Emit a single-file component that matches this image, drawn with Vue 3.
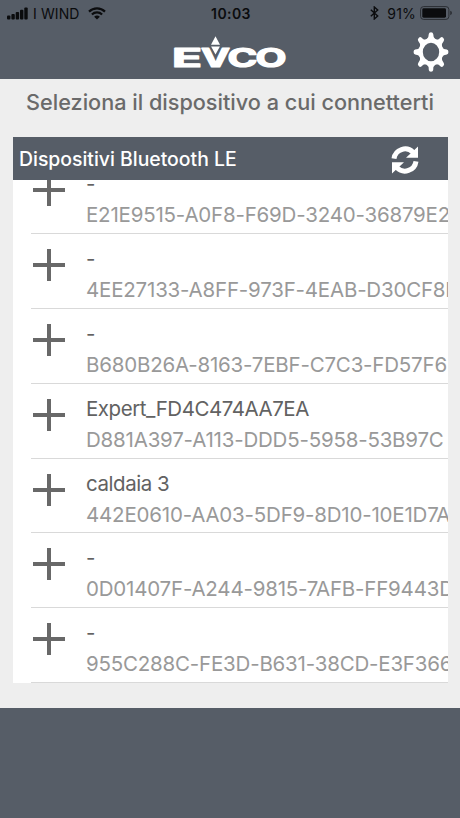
<template>
  <div class="screen">
    <header class="topbar">
      <div class="status">
        <div class="status-left">
          <svg class="signal" width="21" height="13" viewBox="0 0 21 13">
            <rect x="0" y="8.5" width="3.4" height="4" rx="1" />
            <rect x="4.4" y="7" width="3.4" height="5.5" rx="1" />
            <rect x="8.7" y="5" width="3.4" height="7.5" rx="1" />
            <rect x="13" y="2.8" width="3.4" height="9.7" rx="1" />
            <rect x="17.3" y="0.4" width="3.4" height="12.1" rx="1" />
          </svg>
          <span class="carrier">I WIND</span>
          <svg class="wifi" width="18" height="13" viewBox="0 0 18 13">
            <path d="M1 4.6a11.5 11.5 0 0 1 16 0M3.9 7.5a7.4 7.4 0 0 1 10.2 0" fill="none" stroke="#0b0c0e" stroke-width="2.2" />
            <path d="M9 12.6 6.1 9.8a4.2 4.2 0 0 1 5.8 0z" />
          </svg>
        </div>
        <span class="clock">10:03</span>
        <div class="status-right">
          <svg width="9" height="14" viewBox="0 0 9 14">
            <path d="M.8 3.8 7.7 10 4.3 13V1l3.4 3L.8 10.2" fill="none" stroke="#0b0c0e" stroke-width="1.4" />
          </svg>
          <span class="percent">91%</span>
          <svg class="battery" width="33" height="14" viewBox="0 0 33 14">
            <rect x=".6" y=".6" width="28.3" height="12.8" rx="3" fill="none" stroke="#25282d" stroke-width=".9" />
            <rect x="2.3" y="2.3" width="23.7" height="9.4" rx="1.4" />
            <path d="M30.3 4.8v4.4q1.6-.6 1.6-2.2t-1.6-2.2z" fill="#25282d" />
          </svg>
        </div>
      </div>
      <div class="brand-row">
        <svg class="logo" width="124" height="44" viewBox="-4 0 124 44">
          <g class="logo-text">
            <text x="-1" y="31.2" textLength="30" lengthAdjust="spacingAndGlyphs">E</text>
            <text x="28" y="31.2" textLength="29" lengthAdjust="spacingAndGlyphs">V</text>
            <text x="54.5" y="31.2" textLength="30" lengthAdjust="spacingAndGlyphs">C</text>
            <text x="82.5" y="31.2" textLength="31" lengthAdjust="spacingAndGlyphs">O</text>
          </g>
          <path d="M42.5 .2 47 8.8h-9zM38.1 10.4h8.8l-4.4 8z" fill="#fff" />
        </svg>
        <svg class="gear" width="36" height="40" viewBox="-18 -20 36 40">
          <g transform="scale(.88 1)">
            <circle r="11.6" fill="none" stroke="#fff" stroke-width="4.6" />
            <path
              v-for="n in 8"
              :key="n"
              :transform="`rotate(${n * 45})`"
              d="M-5-12.6Q-2.5-14-2.5-18Q-2.3-19.8 0-19.8T2.5-18Q2.5-14 5-12.6z"
              fill="#fff"
            />
          </g>
        </svg>
      </div>
    </header>

    <main class="content">
      <h1>Seleziona il dispositivo a cui connetterti</h1>
      <section class="panel">
        <div class="panel-head">
          <h2>Dispositivi Bluetooth LE</h2>
          <svg class="refresh" width="28" height="28" viewBox="0 0 28 28">
            <path d="M3 12.6A11.2 11.2 0 0 1 22 6.2M25 15.4A11.2 11.2 0 0 1 6 21.8" fill="none" stroke="#fff" stroke-width="5" />
            <path d="M27 .5v11.3H15zM1 27.5V16.2h12z" fill="#fff" />
          </svg>
        </div>
        <div class="list">
          <div v-for="device in devices" :key="device.id" class="device">
            <span class="plus"></span>
            <div class="info">
              <p class="name">{{ device.name }}</p>
              <p class="uuid">{{ device.id }}</p>
            </div>
          </div>
        </div>
      </section>
    </main>

    <footer class="bottom"></footer>
  </div>
</template>

<script setup>
const devices = [
  { name: '-', id: 'E21E9515-A0F8-F69D-3240-36879E2' },
  { name: '-', id: '4EE27133-A8FF-973F-4EAB-D30CF8D' },
  { name: '-', id: 'B680B26A-8163-7EBF-C7C3-FD57F6' },
  { name: 'Expert_FD4C474AA7EA', id: 'D881A397-A113-DDD5-5958-53B97C' },
  { name: 'caldaia 3', id: '442E0610-AA03-5DF9-8D10-10E1D7A' },
  { name: '-', id: '0D01407F-A244-9815-7AFB-FF9443D' },
  { name: '-', id: '955C288C-FE3D-B631-38CD-E3F366' },
];
</script>

<style>
body {
  margin: 0;
}
</style>

<style scoped>
.screen {
  width: 460px;
  height: 818px;
  display: flex;
  flex-direction: column;
  overflow: hidden;
  background: #eeeeee;
  font-family: Inter, "Liberation Sans", sans-serif;
}

.topbar {
  height: 79px;
  flex: none;
  background: #565d67;
}

/* Barra de estado */
.status {
  height: 26px;
  display: grid;
  grid-template-columns: 1fr auto 1fr;
  align-items: center;
  padding: 0 7px;
  color: #0b0c0e;
  fill: #0b0c0e;
  font-size: 14px;
}

.status-left,
.status-right {
  display: flex;
  align-items: center;
}

.status-right {
  justify-content: flex-end;
}

.carrier {
  margin-left: 5px;
  font-size: 14px;
  letter-spacing: 0.1px;
}

.wifi {
  margin-left: 8px;
}

.clock {
  padding-left: 2px;
  font-weight: 600;
  letter-spacing: 0.4px;
}

.percent {
  margin: 0 4px 0 8px;
  letter-spacing: 0.2px;
}

.brand-row {
  height: 53px;
  display: grid;
  grid-template-columns: 1fr 124px 1fr;
  align-items: start;
}

.logo {
  grid-column: 2;
  margin: 10px 0 0 1px;
}

.logo-text {
  fill: #fff;
  stroke: #fff;
  stroke-width: 1.2px;
  stroke-linejoin: round;
  font-size: 25.5px;
  font-weight: 700;
}

.gear {
  justify-self: end;
  margin: 6px 11.5px 0 0;
}

.content {
  height: 629px;
  flex: none;
}

h1 {
  margin: 0;
  height: 58px;
  line-height: 47px;
  text-align: center;
  font-size: 21.65px;
  font-weight: 500;
  color: #6a6a6a;
  white-space: nowrap;
}

.panel {
  width: 435.5px;
  margin-left: 12.5px;
  background: #fff;
}

.panel-head {
  height: 43px;
  display: flex;
  align-items: center;
  justify-content: space-between;
  padding: 0 29px 0 6.5px;
  background: #565d67;
}

h2 {
  margin: 0;
  font-size: 19.4px;
  font-weight: 550;
  color: #fff;
}

.refresh {
  margin-top: 3px;
}

/* Lista desplazada hasta el final */
.list {
  height: 503px;
  display: flex;
  flex-direction: column;
  justify-content: flex-end;
  overflow: hidden;
}

.device {
  height: 74.8px;
  flex: none;
  box-sizing: border-box;
  margin-left: 18.5px;
  padding-left: 2px;
  display: flex;
  border-bottom: 1px solid #d9d9d9;
}

.plus {
  width: 32px;
  height: 32px;
  flex: none;
  margin-top: 15px;
  background:
    linear-gradient(#686868, #686868) center / 32px 4px no-repeat,
    linear-gradient(#686868, #686868) center / 4px 32px no-repeat;
}

.info {
  margin-left: 21px;
  padding-top: 9px;
  min-width: 0;
  overflow: hidden;
  white-space: nowrap;
}

.info p {
  margin: 0;
  font-size: 20.5px;
  line-height: 31px;
}

.name {
  color: #626262;
  letter-spacing: -0.45px;
}

.uuid {
  color: #999;
  letter-spacing: -0.2px;
}

.bottom {
  flex: 1;
  background: #565d67;
}
</style>
